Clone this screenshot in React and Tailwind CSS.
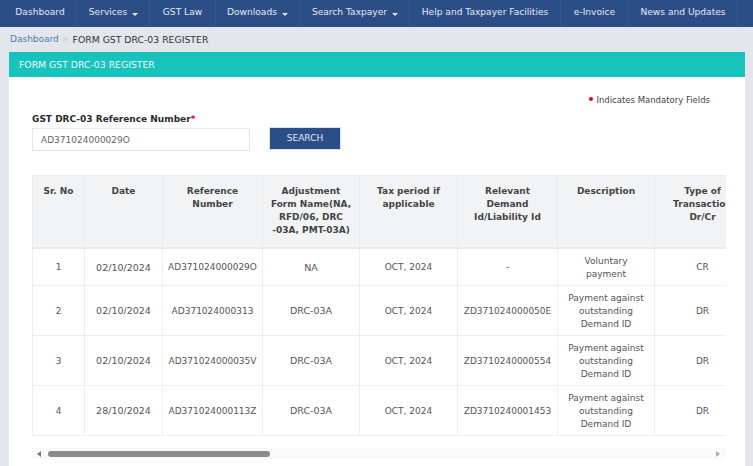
import { useState } from 'react';

const navItems = [
  { label: 'Dashboard', width: 'w-[77px]', extra: 'pl-[4px]' },
  { label: 'Services', width: 'w-[73px]', caret: true, extra: 'pl-[1px]' },
  { label: 'GST Law', width: 'w-[66px]' },
  { label: 'Downloads', width: 'w-[84px]', caret: true },
  { label: 'Search Taxpayer', width: 'w-[110px]', caret: true, extra: 'pl-[1px]' },
  { label: 'Help and Taxpayer Facilities', width: 'w-[151px]' },
  { label: 'e-Invoice', width: 'w-[68px]' },
  { label: 'News and Updates', width: 'w-[109px]' },
];

const headers = [
  'Sr. No',
  'Date',
  <>Reference<br />Number</>,
  <>Adjustment<br />Form Name(NA,<br />RFD/06, DRC<br />-03A, PMT-03A)</>,
  <>Tax period if<br />applicable</>,
  <>Relevant<br />Demand<br />Id/Liability Id</>,
  'Description',
  <>Type of<br />Transaction<br />Dr/Cr</>,
];

const rows = [
  { sr: 1, date: '02/10/2024', ref: 'AD371024000029O', form: 'NA', period: 'OCT, 2024', demand: '-', desc: <>Voluntary<br />payment</>, type: 'CR', height: 'h-[38px]' },
  { sr: 2, date: '02/10/2024', ref: 'AD371024000313', form: 'DRC-03A', period: 'OCT, 2024', demand: 'ZD371024000050E', desc: <>Payment against<br />outstanding<br />Demand ID</>, type: 'DR', height: 'h-[50px]' },
  { sr: 3, date: '02/10/2024', ref: 'AD371024000035V', form: 'DRC-03A', period: 'OCT, 2024', demand: 'ZD3710240000554', desc: <>Payment against<br />outstanding<br />Demand ID</>, type: 'DR', height: 'h-[50px]' },
  { sr: 4, date: '28/10/2024', ref: 'AD371024000113Z', form: 'DRC-03A', period: 'OCT, 2024', demand: 'ZD3710240001453', desc: <>Payment against<br />outstanding<br />Demand ID</>, type: 'DR', height: 'h-[50px]' },
];

const App = () => {
  const [refNumber, setRefNumber] = useState('AD371024000029O');

  return (
    <div className="h-[466px] w-[753px] overflow-hidden bg-[#e3e7eb] font-['DejaVu_Sans',Verdana,sans-serif] text-[9px] text-[#555]">
      <nav className="flex h-[27px] items-stretch bg-[#2c4e86] text-[9.1px] text-[#e4e9f1]">
        {navItems.map((item) => (
          <a key={item.label} href="#" className={`flex shrink-0 items-center justify-center whitespace-nowrap border-r border-[#35578e] pb-[1px] ${item.width} ${item.extra || ''}`}>
            {item.label}
            {item.caret && <span className="ml-[5px] mt-[2px] border-x-[3px] border-t-[3px] border-x-transparent border-t-[#e4e9f1]" />}
          </a>
        ))}
      </nav>

      <div className="flex h-[25px] items-center pl-[10px]">
        <a href="#" className="text-[#4a7cab]">Dashboard</a>
        <span className="ml-[3px] mr-[4px] text-[8px] text-[#c5ccd3]">&gt;</span>
        <span className="text-[9.3px] text-[#333]">FORM GST DRC-03 REGISTER</span>
      </div>

      <main className="ml-[9px] mr-[8px] h-[414px] overflow-hidden bg-white">
        <div className="flex h-[25px] items-center bg-[#17c4bb] pl-[10px] pt-[1px] text-[9.3px] text-[#eafaf9]">FORM GST DRC-03 REGISTER</div>

        <div className="pl-[23px] pr-[19px]">
          <p className="mt-[17px] flex items-center justify-end pr-[16px] text-[8.5px] leading-[13px] text-[#444]">
            <span className="mb-[4px] mr-[3px] size-[4px] rounded-full bg-[#e8001c]" />
            Indicates Mandatory Fields
          </p>

          <div className="mt-[6px] flex items-end">
            <div>
              <label htmlFor="ref-number" className="block font-bold leading-[12px] text-[#2b2b2b]">
                GST DRC-03 Reference Number<span className="text-[#e8001c]">*</span>
              </label>
              <input
                id="ref-number"
                value={refNumber}
                onChange={(e) => setRefNumber(e.target.value)}
                className="mt-[3px] h-[23px] w-[218px] border border-[#e5e7ea] px-[8px] text-[#666] outline-none" />
            </div>
            <button type="button" className="mb-px ml-[19px] h-[23px] w-[72px] border border-[#dbe1ea] bg-[#2c4e86] pt-[1px] text-[#e4e9f1]">SEARCH</button>
          </div>

          <div className="mt-[24px] overflow-hidden">
            <table className="w-[718px] table-fixed border-collapse text-center">
              <colgroup>
                <col className="w-[52px]" />
                <col className="w-[78px]" />
                <col className="w-[100px]" />
                <col className="w-[97px]" />
                <col className="w-[98px]" />
                <col className="w-[100px]" />
                <col className="w-[97px]" />
                <col className="w-[96px]" />
              </colgroup>
              <thead>
                <tr className="h-[72px] bg-[#f2f3f5] align-top">
                  {headers.map((header, i) => (
                    <th key={i} className="whitespace-nowrap border border-b-2 border-[#e8eaed] px-0 pt-[9px] font-bold leading-[13px] text-[#444]">
                      {header}
                    </th>
                  ))}
                </tr>
              </thead>
              <tbody>
                {rows.map((row) => (
                  <tr key={row.sr} className={row.height}>
                    <td className="border border-[#eeeff1] p-0 pt-[2px]">{row.sr}</td>
                    <td className="border border-[#eeeff1] p-0 pt-[2px] text-[9.5px]">{row.date}</td>
                    <td className="border border-[#eeeff1] p-0 pt-[2px] whitespace-nowrap">{row.ref}</td>
                    <td className="border border-[#eeeff1] p-0 pt-[2px] text-[9.5px]">{row.form}</td>
                    <td className="border border-[#eeeff1] p-0 pt-[2px]">{row.period}</td>
                    <td className="border border-[#eeeff1] p-0 pt-[2px] whitespace-nowrap">{row.demand}</td>
                    <td className="border border-[#eeeff1] p-0 pt-[2px] leading-[13px] whitespace-nowrap">{row.desc}</td>
                    <td className="border border-[#eeeff1] p-0 pt-[2px]">{row.type}</td>
                  </tr>
                ))}
              </tbody>
            </table>
          </div>

          {/* scrollbar drawn by hand, headless browser hides the native one */}
          <div className="mt-[12px] flex h-[11px] items-center bg-[#fafafa]">
            <span className="ml-[5px] border-y-[3px] border-r-[4px] border-y-transparent border-r-[#777]" />
            <span className="ml-[7px] h-[6px] w-[222px] rounded-full bg-[#8b8b8b]" />
            <span className="ml-auto mr-[6px] border-y-[3px] border-l-[4px] border-y-transparent border-l-[#aaa]" />
          </div>
        </div>
      </main>
    </div>
  );
};

export default App;
